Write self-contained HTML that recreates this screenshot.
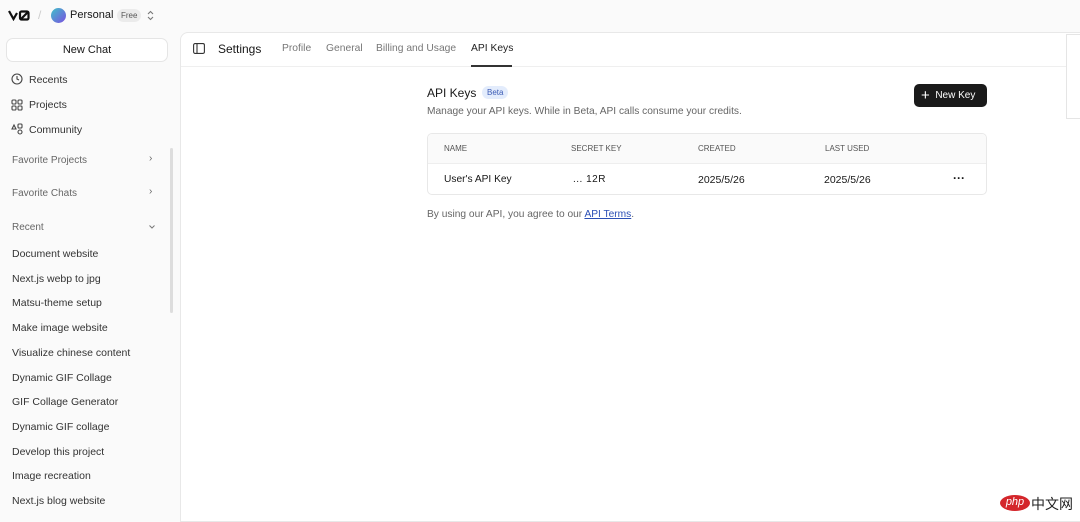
<!DOCTYPE html>
<html><head><meta charset="utf-8"><style>
*{box-sizing:border-box;margin:0;padding:0}
body{width:1080px;height:514px;overflow:hidden;background:#fafafa;font-family:"Liberation Sans","Noto Sans CJK SC",sans-serif;color:#171717;position:relative}
.a{position:absolute;white-space:nowrap}
.side{font-size:10.5px;color:#333}
.gray{color:#666}
</style></head><body>
<!-- top bar -->
<svg class="a" style="left:8px;top:10px" width="22" height="11" viewBox="0 0 22 11" fill="none" stroke="#111" stroke-width="2.2"><path d="M1 1l4.5 8L9 3"/><rect x="12" y="1.5" width="8.5" height="8" rx="1.5"/><path d="M13 9l7-7"/></svg>
<div class="a" style="left:38px;top:8px;color:#ccc;font-size:12px">/</div>
<div class="a" style="left:51px;top:8px;width:15px;height:15px;border-radius:50%;background:linear-gradient(135deg,#3fc1c9,#7b4fe0)"></div>
<div class="a" style="left:70px;top:9px;font-size:11px">Personal</div>
<div class="a" style="left:117px;top:9px;font-size:8px;background:#ebebeb;color:#555;padding:2px 4px;border-radius:8px">Free</div>
<svg class="a" style="left:146px;top:10px" width="9" height="11" viewBox="0 0 9 11" fill="none" stroke="#777" stroke-width="1.1"><path d="M2 4l2.5-2.5L7 4M2 7l2.5 2.5L7 7"/></svg>
<!-- sidebar -->
<div class="a" style="left:6px;top:38px;width:162px;height:24px;background:#fff;border:1px solid #e5e5e5;border-radius:7px;font-size:11px;text-align:center;line-height:22px">New Chat</div>
<svg class="a" style="left:11px;top:73px" width="12" height="12" viewBox="0 0 12 12" fill="none" stroke="#444" stroke-width="1.1"><circle cx="6" cy="6" r="5"/><path d="M6 3v3l2 1"/></svg>
<div class="a side" style="left:29px;top:74px">Recents</div>
<svg class="a" style="left:11px;top:99px" width="12" height="12" viewBox="0 0 12 12" fill="none" stroke="#444" stroke-width="1.1"><rect x="1" y="1" width="4" height="4" rx="1"/><rect x="7" y="1" width="4" height="4" rx="1"/><rect x="1" y="7" width="4" height="4" rx="1"/><rect x="7" y="7" width="4" height="4" rx="1"/></svg>
<div class="a side" style="left:29px;top:99px">Projects</div>
<svg class="a" style="left:11px;top:123px" width="12" height="12" viewBox="0 0 12 12" fill="none" stroke="#444" stroke-width="1.1"><path d="M1 6l2-4 2 4z"/><rect x="7" y="1" width="4" height="4" rx="1"/><circle cx="9" cy="9" r="2"/></svg>
<div class="a side" style="left:29px;top:124px">Community</div>
<div class="a side gray" style="left:12px;top:155px;font-size:10px">Favorite Projects</div>
<div class="a gray" style="left:149px;top:153px;font-size:10px">›</div>
<div class="a side gray" style="left:12px;top:188px;font-size:10px">Favorite Chats</div>
<div class="a gray" style="left:149px;top:186px;font-size:10px">›</div>
<div class="a side gray" style="left:12px;top:222px;font-size:10px">Recent</div>
<svg class="a" style="left:148px;top:224px" width="8" height="6" viewBox="0 0 8 6" fill="none" stroke="#777" stroke-width="1"><path d="M1.5 1.5l2.5 2.5 2.5-2.5"/></svg>
<div class="a" style="left:170px;top:148px;width:3px;height:165px;background:#ddd;border-radius:2px"></div>
<div class="a side" style="left:12px;top:242px;line-height:24.7px;font-size:10.5px">Document website<br>Next.js webp to jpg<br>Matsu-theme setup<br>Make image website<br>Visualize chinese content<br>Dynamic GIF Collage<br>GIF Collage Generator<br>Dynamic GIF collage<br>Develop this project<br>Image recreation<br>Next.js blog website</div>
<!-- main -->
<div class="a" style="left:180px;top:32px;width:910px;height:490px;background:#fff;border:1px solid #e8e8e8;border-radius:8px 0 0 0"></div>
<div class="a" style="left:181px;top:66px;width:899px;height:1px;background:#efefef"></div>
<svg class="a" style="left:193px;top:43px" width="12" height="11" viewBox="0 0 12 11" fill="none" stroke="#333" stroke-width="1.1"><rect x=".6" y=".6" width="10.8" height="9.8" rx="1.5"/><path d="M4 .6v9.8"/></svg>
<div class="a" style="left:218px;top:42px;font-size:12px">Settings</div>
<div class="a" style="left:282px;top:43px;font-size:10.3px;color:#777">Profile</div>
<div class="a" style="left:326px;top:43px;font-size:10.3px;color:#777">General</div>
<div class="a" style="left:376px;top:43px;font-size:10.3px;color:#777">Billing and Usage</div>
<div class="a" style="left:471px;top:43px;font-size:10.3px;color:#222">API Keys</div>
<div class="a" style="left:471px;top:65px;width:41px;height:2px;background:#333"></div>
<div class="a" style="left:1066px;top:34px;width:20px;height:85px;border:1px solid #e5e5e5;background:#fff"></div>
<div class="a" style="left:427px;top:86px;font-size:12px">API Keys</div>
<div class="a" style="left:482px;top:86px;font-size:8px;background:#e3ecfc;color:#3b5bb5;padding:2px 5px;border-radius:8px">Beta</div>
<div class="a" style="left:427px;top:106px;font-size:10.2px;color:#666">Manage your API keys. While in Beta, API calls consume your credits.</div>
<div class="a" style="left:914px;top:84px;width:73px;height:23px;background:#1a1a1a;border-radius:5px;color:#fff;font-size:10px;line-height:23px;padding-left:7px"><span style="font-size:15px;vertical-align:-2px">+</span>&nbsp; New Key</div>
<div class="a" style="left:427px;top:133px;width:560px;height:62px;border:1px solid #e8e8e8;border-radius:5px;overflow:hidden">
<div style="height:30px;background:#fafafa;border-bottom:1px solid #eee"></div></div>
<div class="a" style="left:444px;top:144px;font-size:8px;color:#555">NAME</div>
<div class="a" style="left:571px;top:144px;font-size:8px;color:#555">SECRET KEY</div>
<div class="a" style="left:698px;top:144px;font-size:8px;color:#555">CREATED</div>
<div class="a" style="left:825px;top:144px;font-size:8px;color:#555">LAST USED</div>
<div class="a" style="left:444px;top:174px;font-size:10.2px">User's API Key</div>
<div class="a" style="left:573px;top:174px;font-size:10px;letter-spacing:0.5px">... 12R</div>
<div class="a" style="left:698px;top:174px;font-size:10.5px">2025/5/26</div>
<div class="a" style="left:824px;top:174px;font-size:10.5px">2025/5/26</div>
<div class="a" style="left:953px;top:171px;font-size:12px;font-weight:bold">···</div>
<div class="a" style="left:427px;top:209px;font-size:10.2px;color:#666">By using our API, you agree to our <span style="color:#2b4fb5;text-decoration:underline">API Terms</span>.</div>
<!-- watermark -->
<div class="a" style="left:1000px;top:495px;width:30px;height:16px;background:#d4262b;border-radius:50%;color:#fff;font-size:11px;font-style:italic;text-align:center;line-height:15px">php</div>
<div class="a" style="left:1031px;top:494px;font-size:14px;color:#222">中文网</div>
</body></html>
